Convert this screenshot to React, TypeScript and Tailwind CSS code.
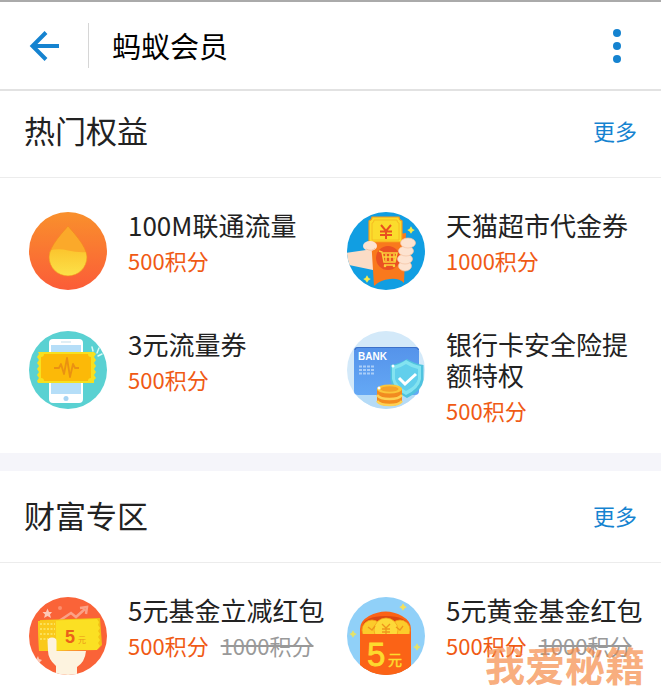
import React from "react";

type Item = {
  title: string;
  price: string;
  original?: string;
  icon: React.ReactNode;
};

const ICON = "mt-0.5 block size-20 shrink-0";

function Sparkle({ x, y, color = "#f6e94b" }: { x: number; y: number; color?: string }) {
  return (
    <path
      transform={`translate(${x} ${y})`}
      fill={color}
      d="M0-3.8Q.9-.9 3.8 0Q.9.9 0 3.8Q-.9.9-3.8 0Q-.9-.9 0-3.8Z"
    />
  );
}

function DropIcon() {
  return (
    <svg viewBox="0 0 80 80" className={ICON} aria-hidden="true">
      <defs>
        <linearGradient id="dropBg" x1="0" y1="0" x2="0" y2="1">
          <stop offset="0" stopColor="#f9902c" />
          <stop offset="1" stopColor="#fb5c38" />
        </linearGradient>
        <linearGradient id="dropFill" x1="0" y1="0" x2="0" y2="1">
          <stop offset="0" stopColor="#fbc52e" />
          <stop offset="1" stopColor="#fce34a" />
        </linearGradient>
        <clipPath id="dropClip">
          <path d="M40 15C43 19 59 35 59 46a19 19 0 0 1-38 0C21 35 37 19 40 15Z" />
        </clipPath>
      </defs>
      <circle cx="40" cy="40" r="39" fill="url(#dropBg)" />
      <g clipPath="url(#dropClip)">
        <rect x="20" y="14" width="40" height="52" fill="#fba92a" />
        <path d="M20 40Q30 37 40 39.500T60 41V66H20Z" fill="url(#dropFill)" />
      </g>
      <path d="M40 15C43 19 59 35 59 46a19 19 0 0 1-38 0C21 35 37 19 40 15Z" fill="none" stroke="#f48a1f" strokeWidth=".7" />
    </svg>
  );
}

function VoucherIcon() {
  return (
    <svg viewBox="0 0 80 80" className={ICON} aria-hidden="true">
      <defs>
        <clipPath id="voucherClip">
          <circle cx="40" cy="40" r="39" />
        </clipPath>
      </defs>
      <circle cx="40" cy="40" r="39" fill="#119ee2" />
      <g clipPath="url(#voucherClip)">
        <path d="M0 42L27 38V59L3 54Z" fill="#fbdcc6" />
      </g>
      <path d="M25 27L60 22L58 72Q53 67 44 68Q34 69 28 75Z" fill="#f9791d" />
      <path d="M26 6H53Q53 9 56 10V31H23V10Q26 9 26 6Z" fill="#fbdc2c" stroke="#f79a1b" strokeWidth="1.200" />
      <path d="M28 9H51Q51 12 53 12V29H26V12Q28 12 28 9Z" fill="none" stroke="#f6b51e" strokeWidth=".8" />
      <path d="M35 14L40 20L45 14M34 20.500H46M34 24H46M40 20V28" fill="none" stroke="#e9511f" strokeWidth="2" />
      <circle cx="42" cy="47" r="12" fill="#ea5122" />
      <path d="M33 40L36 41L38 51H49L51 42H37M38 54H49M40 43V50M44 43V50M48 43V50M37 46H50" fill="none" stroke="#fbd13c" strokeWidth="1.500" />
      <circle cx="39" cy="55" r="1.300" fill="#fbd13c" />
      <circle cx="48" cy="55" r="1.300" fill="#fbd13c" />
      <ellipse cx="24" cy="35" rx="7" ry="5" fill="#fde3d0" />
      <path d="M20 38Q26 41 29 37" fill="none" stroke="#f3c3a4" />
      <g fill="#fde3d0" stroke="#f3c3a4" strokeWidth=".7">
        <ellipse cx="59" cy="55" rx="6.500" ry="5" />
        <ellipse cx="59" cy="48" rx="7.500" ry="5" />
        <ellipse cx="60" cy="40" rx="7.500" ry="5" />
        <ellipse cx="62" cy="32" rx="7.500" ry="5" />
      </g>
      <Sparkle x={65} y={19} />
      <Sparkle x={21} y={68} />
    </svg>
  );
}

function PhoneTicketIcon() {
  return (
    <svg viewBox="0 0 80 80" className={ICON} aria-hidden="true">
      <circle cx="40" cy="40" r="39" fill="#5ad1d2" />
      <rect x="21" y="9" width="34" height="64" rx="4" fill="#fff" />
      <rect x="23" y="15" width="30" height="49" fill="#b5def8" />
      <path d="M33 12H43" stroke="#c9e3ee" strokeWidth="1.200" />
      <circle cx="38" cy="68.500" r="2.500" fill="#a6d4f3" />
      <path
        d="M10 22H66L68 24L66 27L68 30L66 33L68 36L66 39L68 42L66 45L68 48L66 50V53H10L9 51L11 48L9 45L11 42L9 39L11 36L9 33L11 30L9 27L11 24Z"
        fill="#f7e01f"
      />
      <path d="M16 24H60Q60 27 63 27V48Q60 48 60 51H16Q16 48 13 48V27Q16 27 16 24Z" fill="#fcb908" />
      <path
        d="M26 38H31L33 34L36 44L39 28L42 47L45 34L47 38H51"
        fill="none"
        stroke="#ea9112"
        strokeWidth="1.800"
        strokeLinejoin="round"
      />
      <path d="M65 21L64 17M69 23L71 18M70 26L74 24" stroke="#d9fbf5" strokeWidth="1.500" strokeLinecap="round" />
    </svg>
  );
}

function BankIcon() {
  return (
    <svg viewBox="0 0 80 80" className={ICON} aria-hidden="true">
      <defs>
        <clipPath id="bankClip">
          <circle cx="40" cy="40" r="39" />
        </clipPath>
        <linearGradient id="bankCard" x1="0" y1="0" x2="0" y2="1">
          <stop offset="0" stopColor="#5593ea" />
          <stop offset="1" stopColor="#64a8f5" />
        </linearGradient>
      </defs>
      <circle cx="40" cy="40" r="39" fill="#d3e9f9" />
      <path d="M5 65H75Q63 79 40 79Q17 79 5 65Z" fill="#b5dbf7" clipPath="url(#bankClip)" />
      <rect x="8" y="17" width="65" height="48" rx="4" fill="url(#bankCard)" />
      <path d="M9 20Q9 17.500 12 17.500H69Q72 17.500 72.500 20" fill="none" stroke="#3c70c8" strokeWidth="1.200" />
      <text x="12" y="30" fill="#fff" fontSize="10" fontWeight="700" fontFamily="Liberation Sans, Arial, sans-serif">
        BANK
      </text>
      <path d="M13 36.500H28M13 40H28M13 43.500H28" stroke="#a9cdf8" strokeWidth="2" strokeDasharray="3 1" />
      <path d="M61 29Q69 34 77.500 35V50Q76 61 61 68Q46 61 44.500 50V35Q53 34 61 29Z" fill="#50c3df" />
      <path d="M60 30Q68 35 75 36V49Q73 59 60 65Q48 59 46 49V36Q53 35 60 30Z" fill="#83e3f0" />
      <path d="M60 34Q66 38 72 39V49Q70 56 60 61Q51 56 49 49V39Q54 38 60 34Z" fill="#61cfec" />
      <path d="M53 48L59 54L70 44" fill="none" stroke="#fff" strokeWidth="3" />
      <path d="M31 59V71Q34 76 43.500 76T56 71V59Z" fill="#f28b20" />
      <path d="M31 65Q34 69 43.500 69T56 65M31 71Q34 75 43.500 75T56 71" fill="none" stroke="#fdd154" strokeWidth="2.500" />
      <ellipse cx="43.500" cy="59" rx="12.500" ry="4.500" fill="#fbc63a" />
      <ellipse cx="43.500" cy="59" rx="9" ry="2.800" fill="#f4a12a" />
      <circle cx="33" cy="58" r="1.500" fill="#fff" />
      <circle cx="47" cy="36" r="1.500" fill="#fff" />
    </svg>
  );
}

function FundIcon() {
  return (
    <svg viewBox="0 0 80 80" className={ICON} aria-hidden="true">
      <defs>
        <clipPath id="fundClip">
          <circle cx="40" cy="40" r="39" />
        </clipPath>
      </defs>
      <circle cx="40" cy="40" r="39" fill="#fa6338" />
      <path d="M31 25L43 17L48 21L57 13M52 12L59 11L58 18" fill="none" stroke="#fba186" strokeWidth="2.500" />
      <path d="M19.500 12.500L21 16L24 16L22 18.500L23 22L19.500 20L16 22L17 18.500L14.500 16L18 16Z" fill="#fdc9b6" />
      <circle cx="32" cy="12" r="2" fill="#fb8e6d" />
      <path d="M12 24L72 22L74 49L70 53L14 55Z" fill="#f4c015" />
      <path
        d="M10 25L69 23L71 26L70 29L72 32L70 35L72 38L70 41L72 44L70 47L72 50L69 54L11 55Z"
        fill="#fbe023"
      />
      <path d="M10 25L28 24.500V54.500L11 55Z" fill="#fac91b" />
      <path d="M12 28H27M12 33H27M12 38H27M12 43H20" stroke="#fbe15a" strokeWidth="2" strokeDasharray="2 1.500" />
      <text x="37" y="47" fill="#eb6119" fontSize="18" fontWeight="700" fontFamily="Liberation Sans, Arial, sans-serif">
        5
      </text>
      <text x="50" y="47" fill="#eb9419" fontSize="8" fontFamily="Noto Sans CJK SC, sans-serif">
        元
      </text>
      <g clipPath="url(#fundClip)">
        <path
          d="M19.500 45Q19.500 41.500 24 41.500T28.500 45V55H58Q57 66 49 71V79H28V70Q20 63 20 55Z"
          fill="#fdf3df"
        />
        <path d="M10 60L11 63L14 64L12 66L12 69L9 67L5 67L8 64Z" fill="#fdc9b6" />
      </g>
    </svg>
  );
}

function GoldIcon() {
  return (
    <svg viewBox="0 0 80 80" className={ICON} aria-hidden="true">
      <defs>
        <clipPath id="goldClip">
          <circle cx="40" cy="40" r="39" />
        </clipPath>
      </defs>
      <circle cx="40" cy="40" r="39" fill="#90d0f8" />
      <g clipPath="url(#goldClip)">
        <path d="M14 33Q14 25 23 20Q40 11 56 20Q65 25 65 33V80H14Z" fill="#fb6316" />
        <path d="M16 38V31Q18 20 39.500 20T63 31V38Z" fill="#db4713" />
        <g fill="#fccb2b" stroke="#f4a51b" strokeWidth=".8">
          <circle cx="26" cy="34" r="10" />
          <circle cx="54" cy="34" r="10" />
          <circle cx="40" cy="34" r="12" fill="#fdd938" />
        </g>
        <path d="M36 28L40 32L44 28M36 33H44M36 36H44M40 32V39M22 31L26 34L29 30M50 31L54 34L57 30" fill="none" stroke="#ee951b" strokeWidth="1.300" />
        <path d="M14 38H65V80H14Z" fill="#fb6316" />
      </g>
      <text
        x="21"
        y="70"
        fill="#fddb2e"
        stroke="#fddb2e"
        strokeWidth=".8"
        fontSize="33"
        fontFamily="Liberation Sans, Arial, sans-serif"
      >
        5
      </text>
      <text
        x="42"
        y="69"
        fill="#fddb2e"
        stroke="#fddb2e"
        strokeWidth=".5"
        fontSize="14"
        fontFamily="Noto Sans CJK SC, sans-serif"
      >
        元
      </text>
      <Sparkle x={57} y={11} color="#f4e05a" />
      <Sparkle x={7} y={38} color="#e4e26a" />
      <Sparkle x={71} y={51} color="#e4e26a" />
    </svg>
  );
}

const hot: Item[] = [
  { title: "100M联通流量", price: "500积分", icon: <DropIcon /> },
  { title: "天猫超市代金券", price: "1000积分", icon: <VoucherIcon /> },
  { title: "3元流量券", price: "500积分", icon: <PhoneTicketIcon /> },
  { title: "银行卡安全险提额特权", price: "500积分", icon: <BankIcon /> },
];

const wealth: Item[] = [
  { title: "5元基金立减红包", price: "500积分", original: "1000积分", icon: <FundIcon /> },
  { title: "5元黄金基金红包", price: "500积分", original: "1000积分", icon: <GoldIcon /> },
];

function Section({ title, items }: { title: string; items: Item[] }) {
  return (
    <section className="bg-white">
      <div className="flex h-[92px] items-center justify-between border-b border-[#ececec] px-6 pb-1">
        <h2 className="text-[31px] leading-10 text-[#222]">{title}</h2>
        <a href="#" className="text-[22px] leading-8 text-[#1583d0]">
          更多
        </a>
      </div>
      <ul className="grid grid-cols-2 gap-x-[15px] gap-y-[37px] pt-[31px] pr-3 pb-5 pl-7">
        {items.map((item) => (
          <li key={item.title} className="flex items-start gap-5">
            {item.icon}
            <div className="min-w-0 flex-1">
              <h3 className="text-[26px] leading-[31px] text-[#222]">{item.title}</h3>
              <p className="mt-1 flex gap-3 text-[22px] leading-8 whitespace-nowrap text-[#f05a14]">
                <span>{item.price}</span>
                {item.original && <s className="text-[#999]">{item.original}</s>}
              </p>
            </div>
          </li>
        ))}
      </ul>
    </section>
  );
}

export default function App() {
  return (
    <div className="relative min-h-screen overflow-hidden bg-white font-['Noto_Sans_CJK_SC',sans-serif]">
      <header className="relative z-10 flex h-[91px] items-center border-t-2 border-b-2 border-t-[#aaa] border-b-[#e2e2e2] bg-white pr-6 pl-7">
        <button type="button" aria-label="返回" className="size-8">
          <svg viewBox="0 0 32 32" className="size-8" fill="none" stroke="#1583d0" strokeWidth="4">
            <path d="M31 16H5M18 2.500L4.500 16L18 29.500" />
          </svg>
        </button>
        <span className="ml-7 h-[45px] w-px bg-[#d6d6d6]" />
        <h1 className="ml-[23px] flex-1 pb-0.5 text-[29px] leading-10 text-black">蚂蚁会员</h1>
        <button type="button" aria-label="更多操作" className="flex w-10 flex-col items-center gap-[5px]">
          <span className="size-2 rounded-full bg-[#1583d0]" />
          <span className="size-2 rounded-full bg-[#1583d0]" />
          <span className="size-2 rounded-full bg-[#1583d0]" />
        </button>
      </header>
      <main>
        <div className="-mt-[5px] pb-[7px]">
          <Section title="热门权益" items={hot} />
        </div>
        <div className="h-[18px] bg-[#f5f5fa]" />
        <Section title="财富专区" items={wealth} />
      </main>
      <div className="pointer-events-none absolute right-4 bottom-3.5 text-[40px] leading-[44px] font-bold text-[#f58a45]/70">
        我爱秘籍
      </div>
    </div>
  );
}
